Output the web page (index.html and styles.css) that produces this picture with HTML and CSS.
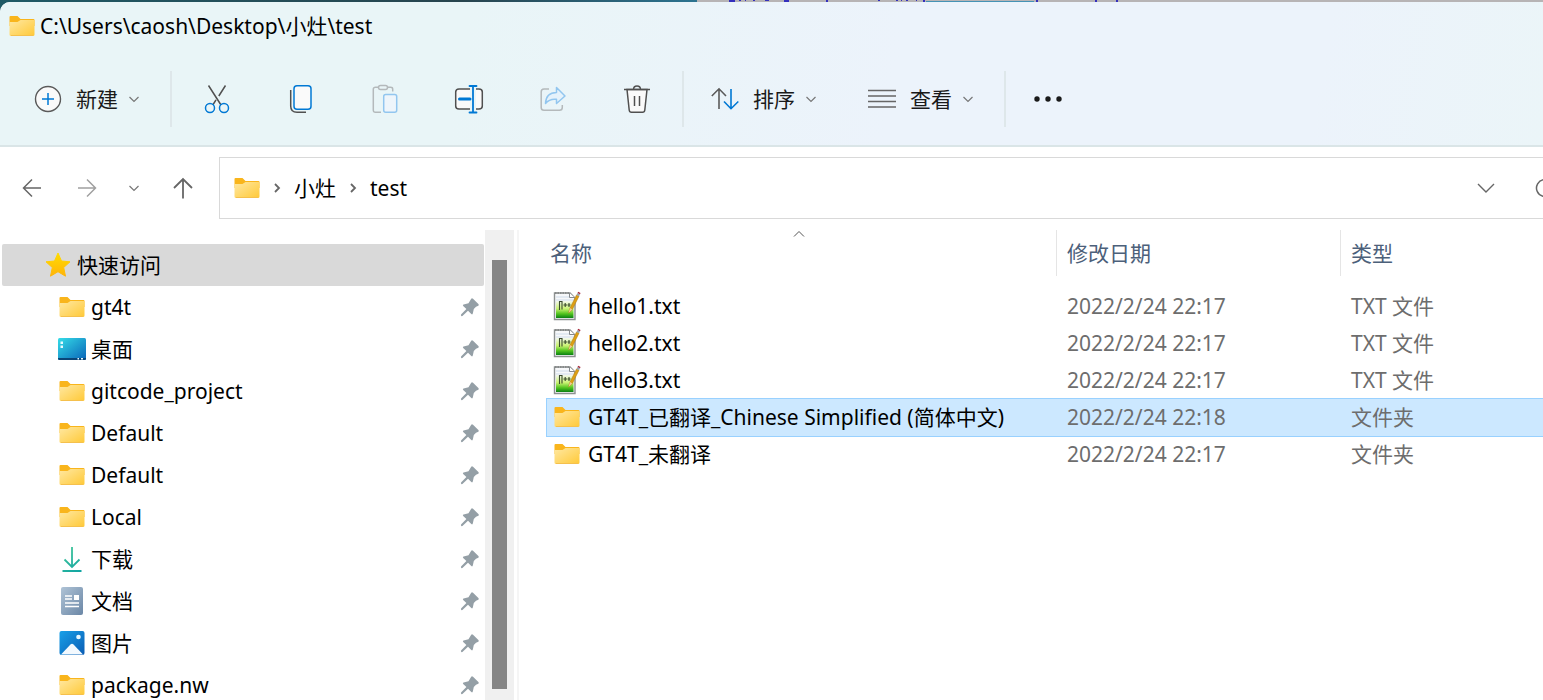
FILE: index.html
```html
<!DOCTYPE html>
<html lang="zh-CN">
  <head>
    <meta charset="UTF-8" />
    <meta name="viewport" content="width=device-width, initial-scale=1.0" />
    <title>C:\Users\caosh\Desktop\小灶\test</title>
    <link rel="stylesheet" href="styles.css">
  </head>
  <body>
    <!-- shared icons -->
    <svg class="sprite" aria-hidden="true">
      <defs>
        <linearGradient id="folder-fill" x1="0" y1="0" x2="1" y2="1">
          <stop offset="0" stop-color="#ffe8a2" />
          <stop offset="1" stop-color="#ffc937" />
        </linearGradient>
        <linearGradient id="npp-fill" x1="0" y1="0" x2="0" y2="1">
          <stop offset="0" stop-color="#f4f8ee" />
          <stop offset="0.45" stop-color="#c9f272" />
          <stop offset="0.75" stop-color="#52c41f" />
          <stop offset="1" stop-color="#0a8013" />
        </linearGradient>
        <linearGradient id="star-fill" x1="0" y1="0" x2="0" y2="1">
          <stop offset="0" stop-color="#ffdc00" />
          <stop offset="1" stop-color="#ffb40a" />
        </linearGradient>
        <linearGradient id="desk-fill" x1="0" y1="0" x2="1" y2="1">
          <stop offset="0" stop-color="#35dde8" />
          <stop offset="1" stop-color="#0964b8" />
        </linearGradient>
        <linearGradient id="doc-fill" x1="0" y1="0" x2="1" y2="1">
          <stop offset="0" stop-color="#afc3d6" />
          <stop offset="1" stop-color="#6b87a6" />
        </linearGradient>
        <linearGradient id="pic-fill" x1="0" y1="0" x2="1" y2="1">
          <stop offset="0" stop-color="#18a0e8" />
          <stop offset="1" stop-color="#0a5cb4" />
        </linearGradient>
        <linearGradient id="down-fill" gradientUnits="userSpaceOnUse" x1="4" y1="2" x2="22" y2="28">
          <stop offset="0" stop-color="#45c898" />
          <stop offset="1" stop-color="#0fa3a3" />
        </linearGradient>
      </defs>
      <symbol id="folder" viewBox="0 0 26 20">
        <path d="M1.500 0H8.500L11.500 3H24.500A1 1 0 0 1 25.500 4V10H.500V1Q.500 0 1.500 0Z" fill="#f9b51c" />
        <path d="M.500 6H8.500L11.500 4H25.500V18.500Q25.500 20 24 20H2Q.500 20 .500 18.500Z" fill="url(#folder-fill)" />
        <path d="M2 19.500H24" stroke="#f5c04d" stroke-width="1" />
      </symbol>
      <symbol id="pin" viewBox="0 0 20 20">
        <path d="M11.200 1.800Q12 .800 13 1.800L18.400 7Q19.300 8 18.300 8.800Q17.200 9.400 16 9.700L13.800 12L12.800 16.600Q12.400 18 11.300 17L8 13.700L2.400 19Q1 19.600 .900 18Q1 17.300 1.500 17L6.400 12L3.200 8.900Q2.300 7.800 3.600 7.400L8.500 6.200Z" fill="#949fa6" />
      </symbol>
      <symbol id="npp" viewBox="0 0 28 30">
        <path d="M1.500 2H17L22 7V28.500H1.500Z" fill="#f7f8fa" stroke="#8c9090" stroke-width="1.400" />
        <path d="M3 6H17M3 9H21" stroke="#cfdcea" stroke-width="1" />
        <path d="M3 10H20.500V27H3Z" fill="url(#npp-fill)" />
        <path d="M2 2H17" stroke="#7d8080" stroke-width="1.500" stroke-dasharray="1.500 1" />
        <path d="M16.500 2V6.500H21.500" fill="#fff" stroke="#85898c" />
        <path d="M6.500 19V10.500H9V18.500M10.500 14H14M12.200 12V16M14.500 14H17.500M16 12V16" fill="none" stroke="#3a4a2c" stroke-width="1.100" />
        <path d="M15.500 22L17 17L23.500 4L26 5.200L19.300 18.500Z" fill="#dea013" stroke="#a87510" stroke-width=".500" />
        <path d="M15.500 22L17 17L19.300 18.500Z" fill="#f0c99a" />
        <path d="M23.500 4L24.500 2L27 3.200L26 5.200Z" fill="#9ba5ad" />
        <path d="M24.500 2L25.200 .800L27.500 2L27 3.200Z" fill="#a5293b" />
      </symbol>
      <symbol id="chevron-down" viewBox="0 0 12 12">
        <path d="M1.500 4L6 8.500L10.500 4" fill="none" stroke="currentColor" stroke-width="1.200" />
      </symbol>
      <symbol id="chevron-right" viewBox="0 0 8 12">
        <path d="M2 2L6 6L2 10" fill="none" stroke="#666" stroke-width="1.800" />
      </symbol>
    </svg>

    <!-- sliver of the windows behind -->
    <div class="backdrop">
      <svg width="846" height="2" viewBox="0 0 846 2" aria-hidden="true">
        <path d="M32 0H38V2H32ZM42 0H44V1H42ZM48 0H49V1H48ZM56 0H58V1H56ZM68 0H72V1H68ZM87 0H92V2H87ZM129 0H131V2H129ZM181 0H183V1H181ZM199 0H201V1H199ZM204 0H205V1H204ZM209 0H211V1H209ZM219 0H220V1H219ZM226 0H228V2H226ZM339 0H341V2H339ZM398 0H400V2H398ZM419 0H421V2H419Z" fill="#3430bd" />
        <path d="M229 1.500H337" stroke="#4593b5" />
      </svg>
    </div>

    <div class="window">
      <header class="header">
        <div class="title">
          <svg class="folder-icon"><use href="#folder" /></svg>
          <h1>C:\Users\caosh\Desktop\小灶\test</h1>
        </div>
        <div class="toolbar">
          <button class="tool tool-new">
            <svg width="28" height="28" viewBox="0 0 28 28" fill="none">
              <circle cx="14" cy="14" r="12.500" fill="#fafafa" stroke="#5a5a5a" stroke-width="1.400" />
              <path d="M14 8V20M8 14H20" stroke="#0078d4" stroke-width="1.500" />
            </svg>
            <span>新建</span>
            <svg class="chevron"><use href="#chevron-down" /></svg>
          </button>
          <div class="separator"></div>
          <div class="icon-tools">
            <button class="tool" aria-label="剪切">
              <svg width="28" height="30" viewBox="0 0 28 30" fill="none" stroke-width="1.500">
                <path d="M5.500 1.500L18 21M22.500 1.500L15.800 12M13 15.800L9.800 21" stroke="#505050" />
                <circle cx="7" cy="24" r="4.500" stroke="#0078d4" />
                <circle cx="21" cy="24" r="4.500" stroke="#0078d4" />
              </svg>
            </button>
            <button class="tool" aria-label="复制">
              <svg width="28" height="30" viewBox="0 0 28 30" fill="none" stroke-width="1.500">
                <path d="M3.700 6V22Q3.700 28.300 10 28.300H19" stroke="#505050" />
                <rect x="7" y="1.700" width="17" height="23.500" rx="3" fill="#fafafa" stroke="#0078d4" />
              </svg>
            </button>
            <button class="tool" aria-label="粘贴" disabled>
              <svg width="28" height="30" viewBox="0 0 28 30" fill="none" stroke-width="1.500">
                <path d="M10 28.300H4.500Q2.300 28.300 2.300 26V5Q2.300 3.300 4.500 3.300H7M17 3.300H19.500Q21.700 3.300 21.700 5V7.500" stroke="#b4b9bb" />
                <rect x="7.500" y="1.500" width="9" height="4" rx="2" stroke="#b4b9bb" />
                <rect x="12.700" y="10.500" width="13" height="17.800" rx="2" fill="#eef5fb" stroke="#92c6ef" />
              </svg>
            </button>
            <button class="tool" aria-label="重命名">
              <svg width="30" height="30" viewBox="0 0 30 30" fill="none" stroke-width="1.500">
                <path d="M16 5H5Q1.700 5 1.700 8V22Q1.700 25 5 25H16" fill="#fafafa" stroke="#505050" />
                <path d="M22 5H25Q28.300 5 28.300 8V22Q28.300 25 25 25H22" fill="#fafafa" stroke="#505050" />
                <path d="M5.500 15H16" stroke="#0078d4" stroke-width="3" stroke-linecap="round" />
                <path d="M19 2V28.500M15.500 2H22.500M15.500 28.500H22.500" stroke="#0078d4" stroke-width="1.800" stroke-linecap="round" />
              </svg>
            </button>
            <button class="tool" aria-label="共享" disabled>
              <svg width="28" height="30" viewBox="0 0 28 30" fill="none" stroke-width="1.500" stroke-linejoin="round">
                <path d="M10 5H5Q2.200 5 2.200 8V23.500Q2.200 26.300 5 26.300H20.500Q23.300 26.300 23.300 23.500V21" stroke="#b4b9bb" />
                <path d="M17.500 3.500L26 12L17.500 19.500V15.300Q10.500 14.500 6.500 19.500Q7 8.500 17.500 8.500Z" fill="#e5f2fb" stroke="#92c6ef" />
              </svg>
            </button>
            <button class="tool" aria-label="删除">
              <svg width="28" height="30" viewBox="0 0 28 30" fill="none" stroke="#505050" stroke-width="1.500">
                <path d="M4 5.500L6.200 26Q6.400 28.300 8.500 28.300H19.500Q21.600 28.300 21.800 26L24 5.500Z" fill="#fafafa" />
                <path d="M1 5.500H27M10.500 5.500Q10.500 2 14 2Q17.500 2 17.500 5.500M11.500 12V22M16.500 12V22" />
              </svg>
            </button>
          </div>
          <div class="separator"></div>
          <div class="menu-tools">
            <button class="tool tool-menu">
              <svg width="28" height="28" viewBox="0 0 28 28" fill="none" stroke-width="1.600">
                <path d="M8 24V4M.800 11L8 3.800L15 11" stroke="#5a5a5a" />
                <path d="M20 4V24M13 16.500L20 23.700L27.300 16.500" stroke="#0078d4" />
              </svg>
              <span>排序</span>
              <svg class="chevron"><use href="#chevron-down" /></svg>
            </button>
            <button class="tool tool-menu">
              <svg width="28" height="28" viewBox="0 0 28 28">
                <path d="M0 5.500H28M0 11H28M0 16.500H28M0 22H28" stroke="#666" stroke-width="1.500" />
              </svg>
              <span>查看</span>
              <svg class="chevron"><use href="#chevron-down" /></svg>
            </button>
          </div>
          <div class="separator"></div>
          <button class="tool" aria-label="更多">
            <svg width="28" height="8" viewBox="0 0 28 8" fill="#1a1a1a">
              <circle cx="3" cy="4" r="2.700" />
              <circle cx="14" cy="4" r="2.700" />
              <circle cx="25" cy="4" r="2.700" />
            </svg>
          </button>
        </div>
      </header>

      <nav class="nav">
        <button aria-label="后退">
          <svg width="20" height="20" viewBox="0 0 20 20" fill="none" stroke="#666" stroke-width="1.500"><path d="M19 10H1.500M10 1.500L1.500 10L10 18.500" /></svg>
        </button>
        <button aria-label="前进" disabled>
          <svg width="20" height="20" viewBox="0 0 20 20" fill="none" stroke="#a0a0a0" stroke-width="1.500"><path d="M1 10H18.500M10 1.500L18.500 10L10 18.500" /></svg>
        </button>
        <button class="history" aria-label="最近浏览的位置">
          <svg class="chevron"><use href="#chevron-down" /></svg>
        </button>
        <button aria-label="上移">
          <svg width="20" height="22" viewBox="0 0 20 22" fill="none" stroke="#666" stroke-width="1.800"><path d="M10 21.500V2M1 11L10 2L19 11" /></svg>
        </button>
        <div class="address">
          <svg class="folder-icon"><use href="#folder" /></svg>
          <svg class="crumb-arrow"><use href="#chevron-right" /></svg>
          <a href="#">小灶</a>
          <svg class="crumb-arrow"><use href="#chevron-right" /></svg>
          <a href="#">test</a>
          <button class="address-toggle" aria-label="以前的位置">
            <svg width="18" height="18" viewBox="0 0 18 18" fill="none" stroke="#666" stroke-width="1.400"><path d="M1 5L9 13L17 5" /></svg>
          </button>
          <button class="refresh" aria-label="刷新">
            <svg width="20" height="20" viewBox="0 0 20 20" fill="none" stroke="#666" stroke-width="1.500"><path d="M16 4A8.500 8.500 0 1 0 18.500 10M16 0V4.500H11.500" /></svg>
          </button>
        </div>
      </nav>

      <main class="content">
        <aside class="sidebar">
          <ul>
            <li class="root">
              <svg width="26" height="26" viewBox="0 0 26 26"><path d="M13 1L16.500 9L25 9.800L18.700 15.500L20.500 24.200L13 19.700L5.500 24.200L7.300 15.500L1 9.800L9.500 9Z" fill="url(#star-fill)" stroke="url(#star-fill)" stroke-linejoin="round" /></svg>
              <a href="#">快速访问</a>
            </li>
            <li>
              <span class="icon"><svg class="folder-icon"><use href="#folder" /></svg></span>
              <a href="#">gt4t</a>
              <svg class="pin"><use href="#pin" /></svg>
            </li>
            <li>
              <span class="icon"><svg width="28" height="22" viewBox="0 0 28 22"><rect width="28" height="22" rx="1.500" fill="url(#desk-fill)" /><path d="M0 20H28V20.500Q28 22 26.500 22H1.500Q0 22 0 20.500Z" fill="#0a4576" /><path d="M2.500 3.500H5V6H2.500ZM2.500 7.500H5V10H2.500ZM19.500 20H21V21.500H19.500ZM23 20H25V21.500H23Z" fill="#e9fbff" /></svg></span>
              <a href="#">桌面</a>
              <svg class="pin"><use href="#pin" /></svg>
            </li>
            <li>
              <span class="icon"><svg class="folder-icon"><use href="#folder" /></svg></span>
              <a href="#">gitcode_project</a>
              <svg class="pin"><use href="#pin" /></svg>
            </li>
            <li>
              <span class="icon"><svg class="folder-icon"><use href="#folder" /></svg></span>
              <a href="#">Default</a>
              <svg class="pin"><use href="#pin" /></svg>
            </li>
            <li>
              <span class="icon"><svg class="folder-icon"><use href="#folder" /></svg></span>
              <a href="#">Default</a>
              <svg class="pin"><use href="#pin" /></svg>
            </li>
            <li>
              <span class="icon"><svg class="folder-icon"><use href="#folder" /></svg></span>
              <a href="#">Local</a>
              <svg class="pin"><use href="#pin" /></svg>
            </li>
            <li>
              <span class="icon"><svg width="26" height="28" viewBox="0 0 26 28" fill="none" stroke="url(#down-fill)" stroke-width="1.800"><path d="M13 2V21.500M5.500 14.500L13 22L20.500 14.500M3.500 26H22.500" /></svg></span>
              <a href="#">下载</a>
              <svg class="pin"><use href="#pin" /></svg>
            </li>
            <li>
              <span class="icon"><svg width="22" height="28" viewBox="0 0 22 28"><rect width="22" height="28" rx="2" fill="url(#doc-fill)" /><path d="M4 9H11M4 12H11M4 16H18M4 19.500H18" stroke="#fff" stroke-width="1.600" /><rect x="13" y="8" width="5" height="5" fill="#fff" /></svg></span>
              <a href="#">文档</a>
              <svg class="pin"><use href="#pin" /></svg>
            </li>
            <li>
              <span class="icon"><svg width="26" height="26" viewBox="0 0 26 26"><rect x=".500" y="1" width="25" height="24" rx="2" fill="url(#pic-fill)" /><path d="M2 24.500L11.500 14.500Q13 13 14.500 14.500L24 24.500Z" fill="#f3f9fe" /><circle cx="19.500" cy="7" r="2.300" fill="#e8f8ff" /></svg></span>
              <a href="#">图片</a>
              <svg class="pin"><use href="#pin" /></svg>
            </li>
            <li>
              <span class="icon"><svg class="folder-icon"><use href="#folder" /></svg></span>
              <a href="#">package.nw</a>
              <svg class="pin"><use href="#pin" /></svg>
            </li>
          </ul>
          <div class="scrollbar"><div class="thumb"></div></div>
        </aside>

        <section class="files">
          <table>
            <thead>
              <tr>
                <th class="col-name">
                  <div>名称</div>
                  <svg class="sort-arrow" viewBox="0 0 12 8"><path d="M1 6.500L6 1.500L11 6.500" fill="none" stroke="#555" /></svg>
                </th>
                <th class="col-date"><div>修改日期</div></th>
                <th><div>类型</div></th>
              </tr>
            </thead>
            <tbody>
              <tr>
                <td class="name"><svg class="npp-icon"><use href="#npp" /></svg>hello1.txt</td>
                <td>2022/2/24 22:17</td>
                <td>TXT 文件</td>
              </tr>
              <tr>
                <td class="name"><svg class="npp-icon"><use href="#npp" /></svg>hello2.txt</td>
                <td>2022/2/24 22:17</td>
                <td>TXT 文件</td>
              </tr>
              <tr>
                <td class="name"><svg class="npp-icon"><use href="#npp" /></svg>hello3.txt</td>
                <td>2022/2/24 22:17</td>
                <td>TXT 文件</td>
              </tr>
              <tr class="selected">
                <td class="name"><svg class="folder-icon"><use href="#folder" /></svg>GT4T_已翻译_Chinese Simplified (简体中文)</td>
                <td>2022/2/24 22:18</td>
                <td>文件夹</td>
              </tr>
              <tr>
                <td class="name"><svg class="folder-icon"><use href="#folder" /></svg>GT4T_未翻译</td>
                <td>2022/2/24 22:17</td>
                <td>文件夹</td>
              </tr>
            </tbody>
          </table>
        </section>
      </main>
    </div>
  </body>
</html>
```

FILE: styles.css
```css
* {
  padding: 0;
  margin: 0;
  box-sizing: border-box;
}

body {
  height: 100vh;
  display: flex;
  flex-direction: column;
  overflow: hidden;
  font-family: "Noto Sans", "Noto Sans CJK SC", sans-serif;
  font-size: 21px;
  line-height: 28px;
  color: #000;
  background: linear-gradient(90deg, #1f5a66, #27444e 30%, #2c7390 697px, #b7b4b5 697px);
}

button {
  font: inherit;
  color: inherit;
  background: none;
  border: 0;
}

a {
  color: inherit;
  text-decoration: none;
}

svg {
  display: block;
  flex-shrink: 0;
}

.sprite {
  position: absolute;
  width: 0;
  height: 0;
}

.backdrop {
  height: 2px;
  padding-left: 697px;
  overflow: hidden;
}

.folder-icon {
  width: 26px;
  height: 20px;
}

.chevron {
  width: 12px;
  height: 12px;
  color: #777;
}

.window {
  flex: 1;
  min-height: 0;
  display: flex;
  flex-direction: column;
  background: #fff;
  border-radius: 10px 0 0 0;
  overflow: hidden;
}

/* title and toolbar */
.header {
  background: linear-gradient(100deg, #e9f5f7 30%, #ecf3fb 58%, #ecf3fb 85%, #ebf5f8);
  border-bottom: 2px solid #dae5e7;
}

.title {
  display: flex;
  align-items: center;
  gap: 5px;
  height: 48px;
  padding-left: 9px;
}

.title h1 {
  font-size: 21px;
  font-weight: 400;
}

.toolbar {
  display: flex;
  align-items: center;
  height: 95px;
  padding: 2px 0 0 34px;
  color: #1a1a1a;
}

.tool {
  display: flex;
  align-items: center;
  justify-content: center;
  width: 84px;
  height: 56px;
}

.tool-new,
.tool-menu {
  justify-content: flex-start;
  gap: 14px;
}

.tool span {
  white-space: nowrap;
}

.tool .chevron {
  margin-left: -4px;
}

.tool-new {
  width: 136px;
}

.tool-menu {
  width: 157px;
  padding-left: 24px;
}

.icon-tools,
.menu-tools {
  display: flex;
  padding: 0 3px;
}

.separator {
  width: 2px;
  height: 56px;
  background: #dee7ea;
}

/* navigation row */
.nav {
  display: flex;
  align-items: center;
  gap: 35px;
  height: 83px;
  padding: 0 0 2px 22px;
}

.nav .history {
  margin: 0 -2px 0 -4px;
}

.address {
  flex: 1;
  display: flex;
  align-items: center;
  gap: 13px;
  height: 62px;
  margin-left: -9px;
  padding-left: 14px;
  border: 1px solid #d9d9d9;
  border-right: 0;
  overflow: hidden;
}

.crumb-arrow {
  width: 8px;
  height: 12px;
}

.address-toggle {
  margin-left: auto;
}

/* refresh runs past the window edge */
.refresh {
  margin: 0 -12px 0 27px;
}

.content {
  flex: 1;
  display: flex;
  min-height: 0;
}

/* quick access tree */
.sidebar {
  flex: 0 0 519px;
  display: flex;
  padding-left: 2px;
  padding-right: 3px;
  border-right: 2px solid #f5f5f5;
}

.sidebar ul {
  flex: 1;
  padding: 14px 1px 0 0;
  list-style: none;
  overflow: hidden;
}

.sidebar li {
  display: flex;
  align-items: center;
  gap: 5px;
  height: 42px;
  padding: 0 4px 0 55px;
}

.sidebar .root {
  gap: 6px;
  padding-left: 43px;
  background: #d9d9d9;
  border-radius: 2px;
}

.icon {
  display: flex;
  justify-content: center;
  width: 29px;
}

.pin {
  width: 20px;
  height: 20px;
  margin-left: auto;
}

.scrollbar {
  width: 29px;
  padding: 30px 7px 11px;
  background: #f0f0f0;
}

.thumb {
  height: 100%;
  background: #858585;
}

/* file list */
.files {
  flex: 1;
  padding-left: 28px;
  overflow: hidden;
}

table {
  width: 100%;
  table-layout: fixed;
  border-collapse: collapse;
}

th {
  position: relative;
  height: 58px;
  text-align: left;
  vertical-align: top;
  font-weight: 400;
  color: #4c607a;
}

th div {
  height: 46px;
  padding-left: 10px;
  line-height: 46px;
  border-left: 1px solid #e5e5e5;
}

.col-name {
  width: 509px;
}

.col-name div {
  padding-left: 3px;
  border: 0;
}

.col-date {
  width: 284px;
}

.sort-arrow {
  position: absolute;
  top: 0;
  left: calc(50% - 9px);
  width: 12px;
  height: 8px;
}

td {
  height: 37px;
  padding: 0 0 2px 11px;
  white-space: nowrap;
  color: #6d6d6d;
}

.name {
  display: flex;
  align-items: center;
  gap: 8px;
  padding-left: 7px;
  color: #000;
}

.name .npp-icon {
  width: 28px;
  height: 30px;
  margin: 0 -1px 0 -1px;
}

.selected {
  background: #cce8ff;
  outline: 1px solid #99d1ff;
}
```
